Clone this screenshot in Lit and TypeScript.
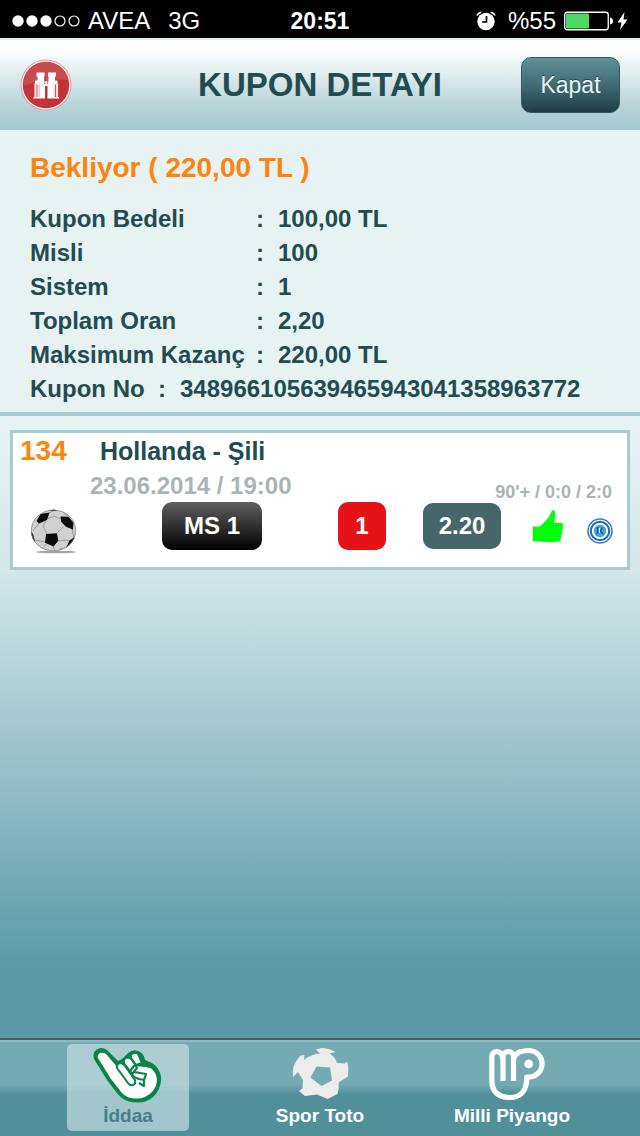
import { LitElement, html, css, svg } from "lit";
import { customElement, state } from "lit/decorators.js";
import { classMap } from "lit/directives/class-map.js";

const sharedText = css`
  :host {
    font-family: "Liberation Sans", Arial, sans-serif;
  }
`;

@customElement("status-bar")
class StatusBar extends LitElement {
  static styles = [
    sharedText,
    css`
      :host {
        display: block;
        background: #000;
        color: #fff;
        font-size: 24px;
        line-height: 38px;
      }
      .bar {
        display: grid;
        grid-template-columns: 1fr auto 1fr;
        height: 38px;
        padding: 0 12px;
        border-bottom: 2px solid #deebed;
      }
      .side {
        display: flex;
        align-items: center;
        gap: 8px;
        padding-top: 2px;
      }
      .time {
        font-weight: bold;
        font-size: 23px;
        padding-top: 2px;
      }
      .network {
        margin-left: 10px;
      }
      .right {
        justify-content: flex-end;
      }
      .alarm {
        margin-right: 4px;
      }
      .power {
        display: flex;
        gap: 4px;
        align-items: center;
      }
      svg {
        display: block;
      }
    `,
  ];

  render() {
    return html`
      <div class="bar">
        <div class="side">
          <svg width="68" height="12" viewBox="0 0 68 12" aria-label="Sinyal">
            ${[6, 20, 34].map((x) => svg`<circle cx=${x} cy="6" r="5.7" fill="#fff" />`)}
            ${[48, 62].map(
              (x) => svg`<circle cx=${x} cy="6" r="5" fill="none" stroke="#fff" stroke-width="1.2" />`
            )}
          </svg>
          <span>AVEA</span>
          <span class="network">3G</span>
        </div>
        <div class="time">20:51</div>
        <div class="side right">
          <svg class="alarm" width="20" height="20" viewBox="0 0 20 20" aria-label="Alarm">
            <circle cx="10" cy="10.5" r="8.7" fill="#fff" />
            <path d="M10.5 5v6H6" fill="none" stroke="#000" stroke-width="1.7" />
            <path d="M1 4.5Q2.2 1.6 5.4 1.2M14.6 1.2Q17.8 1.6 19 4.5" fill="none" stroke="#fff" stroke-width="1.6" />
          </svg>
          <span>%55</span>
          <div class="power">
            <svg width="49" height="20" viewBox="0 0 49 20" aria-label="Pil">
              <rect x=".75" y="1.25" width="43.5" height="17.5" rx="2.5" fill="none" stroke="#fff" stroke-width="1.3" />
              <rect x="2" y="2.5" width="23" height="15" rx="1" fill="#4cd964" />
              <path d="M46 6.5q3 .5 3 3.5t-3 3.5z" fill="#fff" />
            </svg>
            <svg width="11" height="20" viewBox="0 0 11 20" aria-label="Şarj">
              <path d="M7.5 1L.5 11.5h4L3 19l7.5-10.5H6.5z" fill="#fff" />
            </svg>
          </div>
        </div>
      </div>
    `;
  }
}

@customElement("coupon-header")
class CouponHeader extends LitElement {
  static styles = [
    sharedText,
    css`
      :host {
        display: block;
        background: linear-gradient(#fff 0, #fbfdfd 15%, #b5d3d7 75%, #a3c9ce 100%);
      }
      .header {
        display: grid;
        grid-template-columns: 1fr auto 1fr;
        align-items: center;
        height: 90px;
        padding: 0 20px;
      }
      .title {
        margin: 0;
        color: #234b50;
        font-size: 33px;
        font-weight: bold;
        line-height: 40px;
      }
      .round {
        width: 52px;
        height: 52px;
        padding: 0;
        border: 0;
        background: none;
      }
      .close {
        justify-self: end;
        width: 99px;
        height: 56px;
        border: 1px solid #315961;
        border-radius: 10px;
        background: linear-gradient(#609197, #3d686e 55%, #1c3f44);
        color: #edf3f4;
        font: 23px "Liberation Sans", Arial, sans-serif;
        text-shadow: 0 -1px 0 #244549;
      }
      svg {
        display: block;
      }
    `,
  ];

  render() {
    return html`
      <header class="header">
        <button class="round" aria-label="Ara">
          <svg width="52" height="52" viewBox="0 0 52 52">
            <circle cx="26" cy="26" r="25.5" fill="#e59a9c" />
            <circle cx="26" cy="26" r="24.5" fill="#fbeeee" />
            <circle cx="26" cy="26" r="23.2" fill="#c0353a" />
            <path d="M3.2 27Q5 5 26 3q18 1 22.5 18Q24 19 3.2 27z" fill="#cb5558" opacity=".7" />
            <g fill="#fff">
              <path d="M16.5 13.5h8v4h-8zM28 13.5h8v4h-8zM17.5 17h6.500v5h-6.500zM28.500 17h6.500v5h-6.500z" />
              <path d="M15 21.500h10v17h-5.500v-13H15zM37.500 21.500h-10v17H33v-13h4.500z" />
              <path d="M24 22h4.500v5H24zM13.500 38h11.500v1.500H13.500zM27.500 38H39v1.500H27.500z" />
            </g>
            <path d="M15.500 24v14.500M18.500 24v14.500M34 24v14.500M37 24v14.500" stroke="#fae4e4" stroke-width="2.2" />
            <path d="M24.800 21v4M27.700 21v4" stroke="#c0353a" stroke-width=".8" />
          </svg>
        </button>
        <h1 class="title">KUPON DETAYI</h1>
        <button class="close">Kapat</button>
      </header>
    `;
  }
}

@customElement("coupon-summary")
class CouponSummary extends LitElement {
  static styles = [
    sharedText,
    css`
      :host {
        display: block;
        background: #e7f3f3;
        border-bottom: 4px solid #a9cbd0;
        color: #234b50;
      }
      .summary {
        padding: 22px 30px 6px;
      }
      .status {
        margin: 0 0 18px;
        color: #fd850f;
        font-size: 28px;
        font-weight: bold;
        line-height: 32px;
      }
      .rows {
        margin: 0;
        font-size: 24px;
        font-weight: bold;
        line-height: 34px;
      }
      .row {
        display: grid;
        grid-template-columns: 226px 22px 1fr;
      }
      .row.compact {
        grid-template-columns: 128px 22px 1fr;
      }
      .value {
        margin: 0;
      }
    `,
  ];

  rows = [
    ["Kupon Bedeli", "100,00 TL"],
    ["Misli", "100"],
    ["Sistem", "1"],
    ["Toplam Oran", "2,20"],
    ["Maksimum Kazanç", "220,00 TL"],
    ["Kupon No", "348966105639465943041358963772"],
  ];

  render() {
    return html`
      <section class="summary">
        <h2 class="status">Bekliyor ( 220,00 TL )</h2>
        <dl class="rows">
          ${this.rows.map(
            ([label, value]) => html`
              <div class=${classMap({ row: true, compact: value.length > 20 })}>
                <dt>${label}</dt>
                <span>:</span>
                <dd class="value">${value}</dd>
              </div>
            `
          )}
        </dl>
      </section>
    `;
  }
}

@customElement("match-card")
class MatchCard extends LitElement {
  static styles = [
    sharedText,
    css`
      :host {
        display: block;
        border: 3px solid #a9cbd0;
        background: #fff;
        color: #234b50;
        font-size: 24px;
        font-weight: bold;
      }
      .top {
        display: flex;
        line-height: 36px;
      }
      .code {
        width: 80px;
        padding-left: 7px;
        color: #fd850f;
        font-size: 28px;
      }
      .teams {
        margin: 0;
        font-size: 25px;
      }
      .info {
        display: flex;
        justify-content: space-between;
        align-items: flex-end;
        padding: 0 15px 0 77px;
        color: #a9b5b5;
        line-height: 33px;
      }
      .score {
        font-size: 18px;
        line-height: 20px;
      }
      .picks {
        display: grid;
        grid-template-columns: 132fr 176fr 85fr 109fr 55fr 25px;
        align-items: center;
        padding: 0 15px 17px 17px;
      }
      .pill {
        justify-self: start;
        border-radius: 10px;
        color: #fff;
        line-height: 48px;
        text-align: center;
      }
      .market {
        width: 100px;
        background: linear-gradient(#606060, #000);
      }
      .choice {
        width: 48px;
        background: #e51317;
      }
      .odds {
        width: 78px;
        background: #47666a;
        line-height: 46px;
      }
      svg {
        display: block;
        overflow: visible;
      }
    `,
  ];

  render() {
    return html`
      <article>
        <div class="top">
          <span class="code">134</span>
          <h3 class="teams">Hollanda - Şili</h3>
        </div>
        <div class="info">
          <span>23.06.2014 / 19:00</span>
          <span class="score">90'+ / 0:0 / 2:0</span>
        </div>
        <div class="picks">
          <svg width="47" height="48" viewBox="0 0 47 48" aria-label="Futbol">
            <defs>
              <clipPath id="ball"><ellipse cx="23.5" cy="28.5" rx="22.5" ry="20.8" /></clipPath>
            </defs>
            <ellipse cx="26" cy="50" rx="20" ry="1.3" fill="#a5a5a5" />
            <g clip-path="url(#ball)">
              <path d="M0 5h47v46H0z" fill="#d0d0d0" />
              <path
                d="M19 11l6-3M17 17l7-3 7 3M16 19l-3 5 4 8M33 25l-6 6M9 21l-6 8M17 41l-3 4M15 40l-10-2M23 44l2 6M28 39l9-1 3 1M42 27l2 9M37 14l-5-5M36 46l-7 1"
                fill="none"
                stroke="#9a9a9a"
              />
              <path
                d="M6.500 19l4-7 9-1.500-2.500 7.500-8 3.500zM30.500 14.500l8 .2 5 6-.6 6.800-6.900-2.800-4.700-4.700zM16 32l11-.7 1.300 7.400-4.700 5.800-8.600-3.800zM44.500 35l.5 5-5.500 5.500-3.500.5 3.300-7.300zM0 27l3.300 5.700 2 8L1 38zM18 7h10l-2 2h-6z"
                fill="#0a0a0a"
              />
            </g>
            <ellipse cx="23.5" cy="28.5" rx="22.2" ry="20.4" fill="none" stroke="#888" stroke-width=".8" />
          </svg>
          <span class="pill market">MS 1</span>
          <span class="pill choice">1</span>
          <span class="pill odds">2.20</span>
          <svg width="32" height="34" viewBox="0 0 32 34" aria-label="Kazandı">
            <path
              d="M.7 17.500H8l8.700-9L20 1.500q2.500-1 3 1V8l-1 5.500 8 .5q1.800 1.500.7 4 .5 2-.5 3.500.5 2-.7 3.500.3 2-.5 3.500 0 3-1.500 3.500-6 2-13.300 1L.7 32.300z"
              fill="#00ff08"
            />
          </svg>
          <svg width="26" height="36" viewBox="0 -10 26 36" aria-label="İddaa">
            <circle cx="13" cy="13" r="12" fill="#fff" stroke="#3d7db4" stroke-width="1.6" />
            <circle cx="13" cy="13" r="9.200" fill="#fff" stroke="#2467a6" stroke-width="2" />
            <circle cx="13" cy="13" r="6.2" fill="#3cabd7" />
            <path d="M10.5 9v7M15.500 9.500l-2 3.500 2.500 3" fill="none" stroke="#16599c" stroke-width="1.5" />
            <path d="M12.500 10v5" stroke="#e4f6fc" />
          </svg>
        </div>
      </article>
    `;
  }
}

@customElement("tab-bar")
class TabBar extends LitElement {
  @state() active = 0;

  static styles = [
    sharedText,
    css`
      :host {
        display: block;
        border-top: 2px solid #4b5d60;
        background: linear-gradient(#8cb9bf 0 2px, #74aab1 2px 47%, #529099 56% 100%);
      }
      .tabs {
        display: grid;
        grid-template-columns: repeat(3, 122px);
        justify-content: center;
        gap: 70px;
        padding: 4px 0 5px;
      }
      .tab {
        display: flex;
        flex-direction: column;
        align-items: center;
        justify-content: space-between;
        height: 87px;
        padding: 3px 0 4px;
        box-sizing: border-box;
        border: 0;
        border-radius: 5px;
        background: none;
        color: #fff;
        font: bold 19px/22px "Liberation Sans", Arial, sans-serif;
        white-space: nowrap;
      }
      .tab.active {
        background: linear-gradient(#acced3 0 47%, #a1c6cb 56%);
        color: #458087;
      }
      svg {
        display: block;
      }
    `,
  ];

  tabs = [
    {
      label: "İddaa",
      icon: html`<svg width="70" height="56" viewBox="0 0 70 56">
        <path
          d="M1 12Q-1 6 3 3q5-4 11 0l11 11 4-2 6-6q6-5 12-1 4 2 5 8l7 3q8 5 9 14 1 12-9 21-7 5-15 4.5-9 0-15-4.5-5-4-9-10L14 33z"
          fill="#0a8446"
        />
        <path
          d="M5 11q-1-3 2-5 3-1 6 1l13 15 18-3 12 1q7 4 8 12 0 8-6 14-7 6-15 5.5-9 0-14-5.5L18 32z"
          fill="#fff"
        />
        <g fill="#fff" stroke="#0a8446" stroke-width="2" stroke-linejoin="round">
          <path d="M38 11q-1-4 3-5 4-1 5 3l3 7-6 2z" />
          <path d="M31 16q-1-4 2-5 4-1 6 2l5 8-5 6z" />
          <path d="M24 21q-1-4 3-5 3 0 5 3l10 14q1 4-2 5-3 1-5-2z" />
        </g>
        <path
          d="M57 20q-8-3-16-1l-4 5 4 6 5 2 5 1v6l-5-3M41 25l12 2-2 6"
          fill="none"
          stroke="#0a8446"
          stroke-width="2.2"
          stroke-linejoin="round"
        />
      </svg>`,
    },
    {
      label: "Spor Toto",
      icon: html`<svg width="58" height="56" viewBox="0 0 58 56">
        <path
          fill-rule="evenodd"
          fill="#ececec"
          d="M25 2.500L30.500 1q7 0 14 4l-6 1.500q6 4 7.500 9.500l8 .5 2-2q2 6 1 15l-9.500 6q1 6-1 11.500L36.500 52 26 47.500 14 49l-6-5 3.500-2.500.5-8.500-5-8-5 5q-2-12 7.500-21.500l4-.5-.5 5Q20 7 29 6.500zM25.500 19.500l-6 11 11 8.500 10.500-5.500-2-13z"
        />
      </svg>`,
    },
    {
      label: "Milli Piyango",
      icon: html`<svg width="66" height="56" viewBox="0 0 66 56">
        <path
          d="M12.800 33V10q0-5 5-5.500 5 .5 5.500 5.500 1-5 6-5.500 5 .5 5.500 5 5-6 15-6a13 13 0 0 1 0 26.500h-2Q48 50.500 30.500 50.500 12.800 50 12.800 33M24 34V9M34.500 34V9"
          fill="none"
          stroke="#fff"
          stroke-width="5.2"
          stroke-linejoin="round"
        />
        <path d="M34.500 12Q37 6 42 4" fill="none" stroke="#fff" stroke-width="5" />
        <circle cx="49.7" cy="17" r="4.4" fill="#fff" />
      </svg>`,
    },
  ];

  render() {
    return html`
      <nav class="tabs">
        ${this.tabs.map(
          (tab, i) => html`
            <button class=${classMap({ tab: true, active: i === this.active })} @click=${() => (this.active = i)}>
              ${tab.icon}
              <span>${tab.label}</span>
            </button>
          `
        )}
      </nav>
    `;
  }
}

@customElement("app-root")
class AppRoot extends LitElement {
  static styles = css`
    :host {
      display: flex;
      flex-direction: column;
      min-height: 100vh;
    }
    .list {
      flex: 1;
      padding: 14px 10px;
      background: linear-gradient(#e7f3f3 0, #d3e6e9 25%, #599aa4 89%);
    }
  `;

  render() {
    return html`
      <status-bar></status-bar>
      <coupon-header></coupon-header>
      <coupon-summary></coupon-summary>
      <main class="list"><match-card></match-card></main>
      <tab-bar></tab-bar>
    `;
  }
}
